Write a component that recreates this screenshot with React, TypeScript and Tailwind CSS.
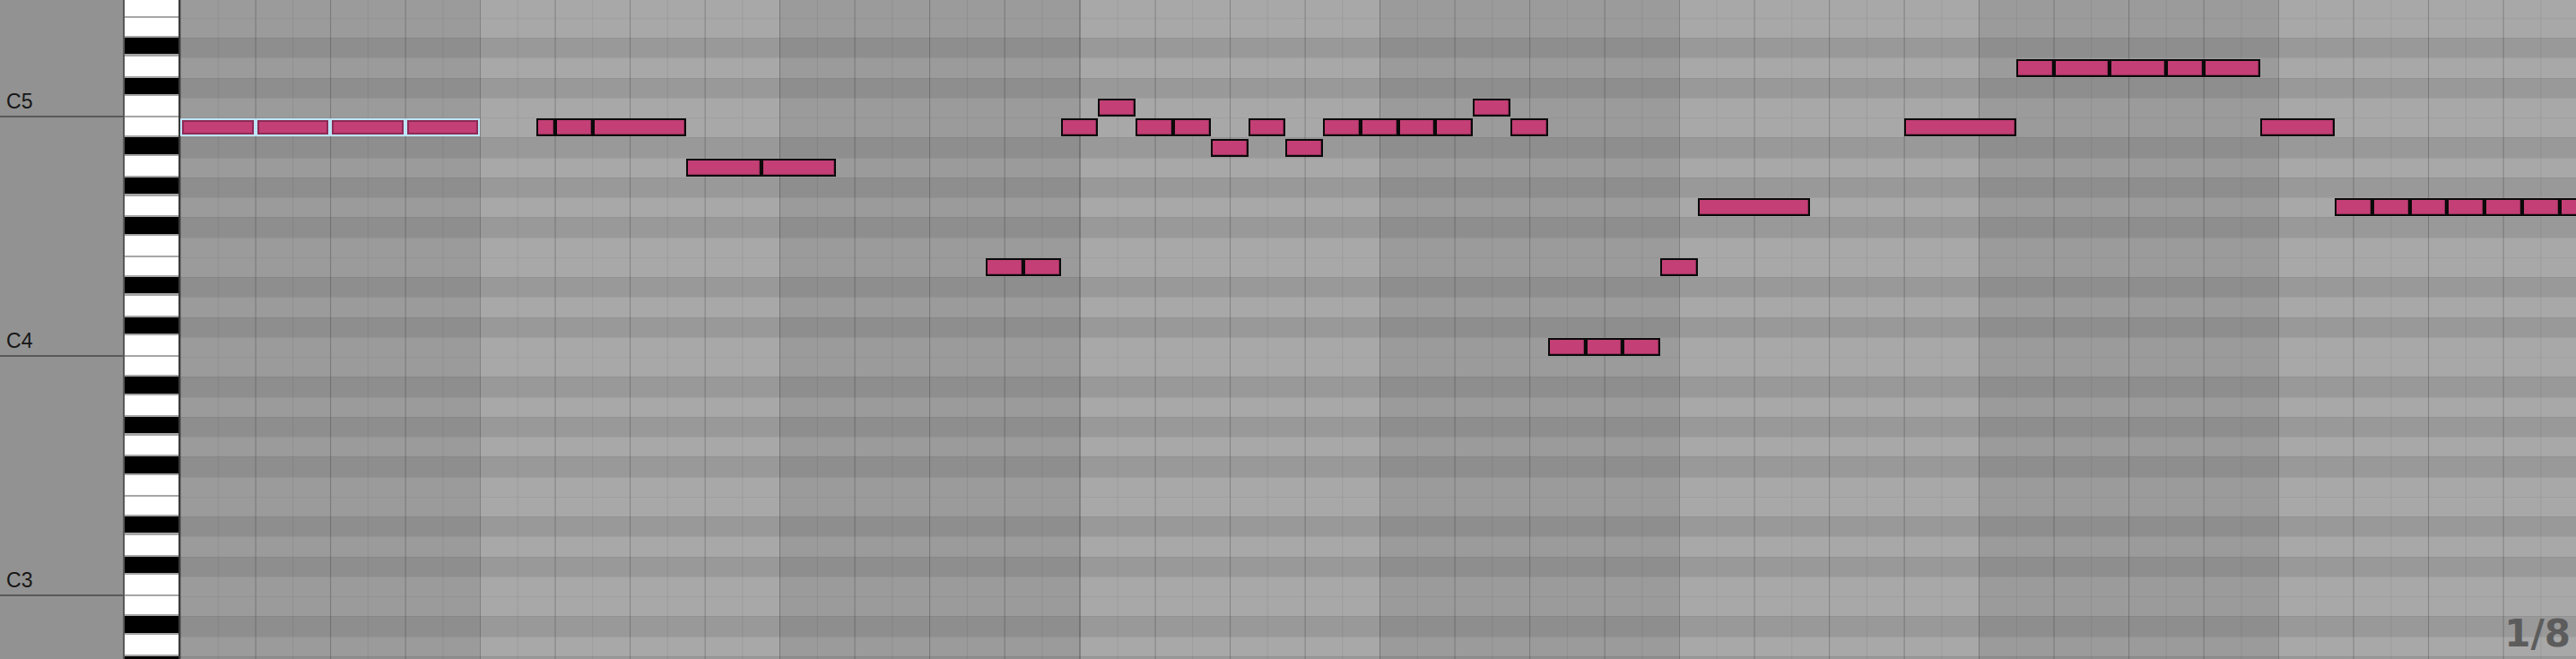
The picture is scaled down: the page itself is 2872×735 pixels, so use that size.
import React from 'react'
import clsx from 'clsx'

// piano roll geometry (px)
const BAR = 334.2
const SIXTEENTH = BAR / 16

const BLACK_KEYS = [1, 3, 6, 8, 10]

// top row is F5 (89), bottom row G#2 (56) — C3 = 60
const PITCHES = Array.from({ length: 34 }, (_, i) => 89 - i)

interface Note {
    p: number;
    s: number;
    e: number;
    sel?: boolean;
}

const NOTES: Note[] = [
    { p: 83, s: 0, e: 4, sel: true },
    { p: 83, s: 4, e: 8, sel: true },
    { p: 83, s: 8, e: 12, sel: true },
    { p: 83, s: 12, e: 16, sel: true },
    { p: 83, s: 19, e: 20 },
    { p: 83, s: 20, e: 22 },
    { p: 83, s: 22, e: 27 },
    { p: 81, s: 27, e: 31 },
    { p: 81, s: 31, e: 35 },
    { p: 76, s: 43, e: 45 },
    { p: 76, s: 45, e: 47 },
    { p: 83, s: 47, e: 49 },
    { p: 84, s: 49, e: 51 },
    { p: 83, s: 51, e: 53 },
    { p: 83, s: 53, e: 55 },
    { p: 82, s: 55, e: 57 },
    { p: 83, s: 57, e: 59 },
    { p: 82, s: 59, e: 61 },
    { p: 83, s: 61, e: 63 },
    { p: 83, s: 63, e: 65 },
    { p: 83, s: 65, e: 67 },
    { p: 83, s: 67, e: 69 },
    { p: 84, s: 69, e: 71 },
    { p: 83, s: 71, e: 73 },
    { p: 72, s: 73, e: 75 },
    { p: 72, s: 75, e: 77 },
    { p: 72, s: 77, e: 79 },
    { p: 76, s: 79, e: 81 },
    { p: 79, s: 81, e: 87 },
    { p: 83, s: 92, e: 98 },
    { p: 86, s: 98, e: 100 },
    { p: 86, s: 100, e: 103 },
    { p: 86, s: 103, e: 106 },
    { p: 86, s: 106, e: 108 },
    { p: 86, s: 108, e: 111 },
    { p: 83, s: 111, e: 115 },
    { p: 79, s: 115, e: 117 },
    { p: 79, s: 117, e: 119 },
    { p: 79, s: 119, e: 121 },
    { p: 79, s: 121, e: 123 },
    { p: 79, s: 123, e: 125 },
    { p: 79, s: 125, e: 127 },
    { p: 79, s: 127, e: 129 },
]

const LINES =
    "[background-image:linear-gradient(to_right,rgba(0,0,0,0.17)_1px,transparent_1px),linear-gradient(to_right,rgba(0,0,0,0.07)_1px,transparent_1px)] [background-size:83.55px_100%,41.775px_100%] shadow-[inset_0_1px_0_rgba(0,0,0,0.045)]"

const cellClass = (darkBar: boolean, blackKey: boolean) => {
    if (darkBar) return blackKey ? "bg-[#8e8e8e]" : "bg-[#9b9b9b]"
    return blackKey ? "bg-[#999999]" : "bg-[#a8a8a8]"
}

const Key = ({ black }: { black: boolean }) => {
    if (black) {
        return (
            <div className="flex w-[60px] shrink-0 flex-col">
                <div className="flex-1 bg-black" />
                <div className="h-[2.5px] bg-[#a6a6a6]" />
                <div className="h-[1.5px] bg-white" />
            </div>
        )
    }
    return (
        <div className="flex w-[60px] shrink-0 flex-col">
            <div className="flex-1 bg-white" />
            <div className="h-[2px] bg-[#a6a6a6]" />
        </div>
    )
}

const NoteBox = ({ note }: { note: Note }) => {
    const style = { left: note.s * SIXTEENTH, width: (note.e - note.s) * SIXTEENTH }
    if (note.sel) {
        return (
            <div className="absolute top-[1.25px] h-[20px] border-[2.5px] border-[#bde5f7]" style={style}>
                <div className="h-full border-2 border-[#8d2a55] bg-[#c33f75]" />
            </div>
        )
    }
    return (
        <div
            className="absolute top-[1.25px] h-[20px] border-2 border-[#0a0a0a] bg-[#c33f75] shadow-[inset_-1px_-1px_0_#97305c]"
            style={style}
        />
    )
}

const Row = ({ p }: { p: number }) => {
    const black = BLACK_KEYS.includes(p % 12)
    const isC = p % 12 === 0
    const notes = NOTES.filter(n => n.p === p)

    return (
        <div className="flex h-[22.25px] shrink-0">
            <div
                className={clsx(
                    "flex w-[137px] shrink-0 items-end bg-[#929292] pl-[7px]",
                    isC ? "border-b-2 border-[#595959] pb-[4.5px]" : ""
                )}
            >
                {isC && (
                    <span className="text-[23px] leading-none text-[#161616]">C{p / 12 - 2}</span>
                )}
            </div>
            <div className="w-[2px] shrink-0 bg-[#595959]" />
            <Key black={black} />
            <div className="w-[2px] shrink-0 bg-[#3a3a3a]" />
            <div className="relative flex flex-1 overflow-hidden">
                {Array.from({ length: 8 }, (_, b) => (
                    <div key={b} className={clsx("h-full w-[334.2px] shrink-0", cellClass(b % 2 === 0, black), LINES)} />
                ))}
                {notes.map((n, i) => (
                    <NoteBox key={i} note={n} />
                ))}
            </div>
        </div>
    )
}

export default function App() {
    return (
        <div className="relative h-[735px] w-[2872px] overflow-hidden bg-[#929292] font-['Liberation_Sans',Arial,sans-serif]">
            <div className="-mt-[2.5px] flex flex-col">
                {PITCHES.map(p => (
                    <Row key={p} p={p} />
                ))}
            </div>
            <div className="absolute bottom-[7px] right-[6px] font-['DejaVu_Sans',sans-serif] text-[42px] font-bold leading-none text-[#5c5c5c]">
                1/8
            </div>
        </div>
    )
}
